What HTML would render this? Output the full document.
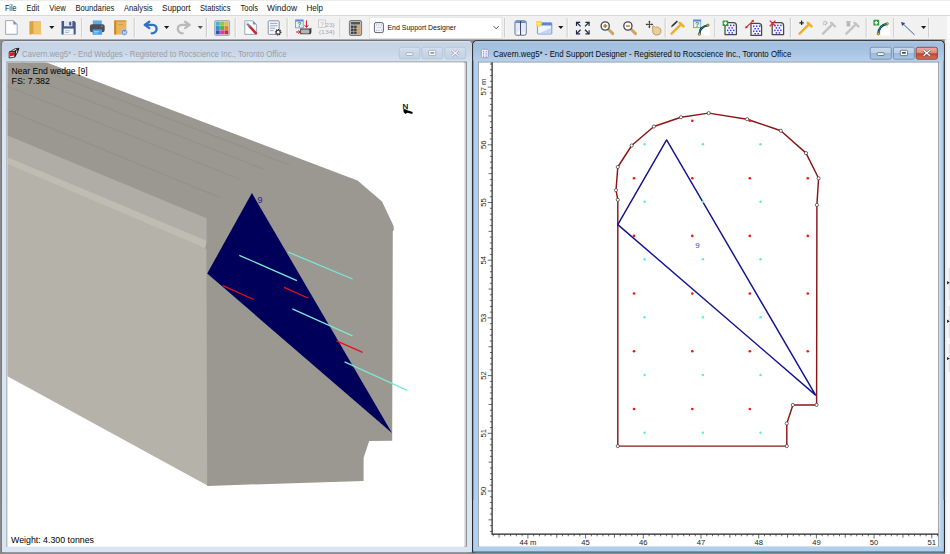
<!DOCTYPE html>
<html><head><meta charset="utf-8"><title>Cavern.weg5 - End Support Designer</title>
<style>
html,body{margin:0;padding:0;background:#fff;overflow:hidden}
body{width:950px;height:554px;position:relative;font-family:"Liberation Sans",sans-serif}
svg{position:absolute;left:0;top:0;display:block}
text{font-family:"Liberation Sans",sans-serif}
</style></head><body>
<svg width="950" height="554" viewBox="0 0 950 554">
<defs>
<linearGradient id="tbInact" x1="0" y1="0" x2="0" y2="1"><stop offset="0" stop-color="#dbe6f2"/><stop offset="0.09" stop-color="#c5d3e4"/><stop offset="0.5" stop-color="#c9d7e8"/><stop offset="1" stop-color="#d6e3f1"/></linearGradient>
<linearGradient id="tbAct" x1="0" y1="0" x2="0" y2="1"><stop offset="0" stop-color="#bcd3ec"/><stop offset="0.1" stop-color="#a1bede"/><stop offset="0.5" stop-color="#a8c4e3"/><stop offset="1" stop-color="#b8d1ec"/></linearGradient>
<linearGradient id="btnI" x1="0" y1="0" x2="0" y2="1"><stop offset="0" stop-color="#d5e0ee"/><stop offset="0.5" stop-color="#c9d6e7"/><stop offset="1" stop-color="#c4d2e4"/></linearGradient>
<linearGradient id="btnA" x1="0" y1="0" x2="0" y2="1"><stop offset="0" stop-color="#c9daee"/><stop offset="0.48" stop-color="#bccfe8"/><stop offset="0.52" stop-color="#9db9db"/><stop offset="1" stop-color="#adc6e4"/></linearGradient>
<linearGradient id="btnX" x1="0" y1="0" x2="0" y2="1"><stop offset="0" stop-color="#e7b0a4"/><stop offset="0.46" stop-color="#d98c7c"/><stop offset="0.54" stop-color="#c6432b"/><stop offset="1" stop-color="#d4735b"/></linearGradient>
<linearGradient id="shadR" x1="0" y1="0" x2="1" y2="0"><stop offset="0.994" stop-color="#ffffff"/><stop offset="1" stop-color="#c4c4c4"/></linearGradient>
</defs>

<rect x="0" y="0" width="950" height="554" fill="#ffffff"/>
<rect x="0" y="0" width="950" height="1" fill="#ececec"/>
<rect x="0" y="15" width="950" height="1" fill="#d9d9d9"/>
<rect x="0" y="16" width="950" height="23.5" fill="#f1f1f1"/>
<rect x="0" y="39.3" width="950" height="515" fill="#8a8a8a"/>
<rect x="944.8" y="39.3" width="5.2" height="515" fill="#e9e9e9"/>
<rect x="946.5" y="39.3" width="3.5" height="515" fill="#f8f8f8"/>
<rect x="947" y="16" width="3" height="23.3" fill="#fbfbfb"/>
<rect x="1.3" y="40.5" width="471.2" height="512" rx="4.5" ry="4.5" fill="#5e6166"/>
<rect x="1.3" y="500" width="471.2" height="52.5" fill="#5e6166"/>
<rect x="1.9" y="41" width="470" height="511.2" rx="4" ry="4" fill="#d9e5f3"/>
<rect x="1.9" y="500" width="470" height="52.2" fill="#d9e5f3"/>
<rect x="1.9" y="41" width="470" height="22" rx="4" ry="4" fill="url(#tbInact)"/>
<rect x="6.6" y="61.6" width="460.2" height="485.2" fill="#7e7e7e"/>
<rect x="7.5" y="62.5" width="458.5" height="484.2" fill="url(#shadR)"/>
<rect x="7.5" y="62.5" width="456.3" height="484.2" fill="#ffffff"/>
<rect x="472.2" y="40.3" width="472.6" height="512.8" rx="4.5" ry="4.5" fill="#23262b"/>
<rect x="472.2" y="500" width="472.6" height="53.1" fill="#23262b"/>
<rect x="473.3" y="41.2" width="470.4" height="511" rx="3.5" ry="3.5" fill="#b3cfee"/>
<rect x="473.3" y="500" width="470.4" height="52.2" fill="#b3cfee"/>
<rect x="473.3" y="41.2" width="470.4" height="21" rx="3.5" ry="3.5" fill="url(#tbAct)"/>
<rect x="939" y="63" width="1.6" height="484" fill="#c9ddf3"/>
<rect x="473.3" y="551.3" width="470.4" height="1.2" fill="#3c8ea6"/>
<rect x="478" y="61.7" width="461" height="485.2" fill="#8a929b"/>
<rect x="478.8" y="62.5" width="459.4" height="484.2" fill="#ffffff"/>
<rect x="0" y="552.8" width="945" height="1.2" fill="#8a8a8a"/>
<text x="5.0" y="11.1" font-size="8.8" fill="#141414" textLength="11.4" lengthAdjust="spacingAndGlyphs">File</text>
<text x="26.5" y="11.1" font-size="8.8" fill="#141414" textLength="12.7" lengthAdjust="spacingAndGlyphs">Edit</text>
<text x="49.3" y="11.1" font-size="8.8" fill="#141414" textLength="16.4" lengthAdjust="spacingAndGlyphs">View</text>
<text x="75.4" y="11.1" font-size="8.8" fill="#141414" textLength="38.9" lengthAdjust="spacingAndGlyphs">Boundaries</text>
<text x="124" y="11.1" font-size="8.8" fill="#141414" textLength="28.5" lengthAdjust="spacingAndGlyphs">Analysis</text>
<text x="162" y="11.1" font-size="8.8" fill="#141414" textLength="28.5" lengthAdjust="spacingAndGlyphs">Support</text>
<text x="200" y="11.1" font-size="8.8" fill="#141414" textLength="30.5" lengthAdjust="spacingAndGlyphs">Statistics</text>
<text x="240.5" y="11.1" font-size="8.8" fill="#141414" textLength="17.5" lengthAdjust="spacingAndGlyphs">Tools</text>
<text x="267" y="11.1" font-size="8.8" fill="#141414" textLength="30.0" lengthAdjust="spacingAndGlyphs">Window</text>
<text x="306.5" y="11.1" font-size="8.8" fill="#141414" textLength="16.5" lengthAdjust="spacingAndGlyphs">Help</text>
<text x="22" y="56.6" font-size="8.4" fill="#9a9fa9" textLength="264.5" lengthAdjust="spacingAndGlyphs">Cavern.weg5* - End Wedges - Registered to Rocscience Inc., Toronto Office</text>
<text x="493.3" y="56.6" font-size="8.4" fill="#0a0a0a" textLength="298" lengthAdjust="spacingAndGlyphs">Cavern.weg5* - End Support Designer - Registered to Rocscience Inc., Toronto Office</text>
<rect x="399.2" y="47.3" width="20.6" height="11.5" rx="1.8" fill="url(#btnI)" stroke="#b3c1d4" stroke-width="0.8"/>
<rect x="421.9" y="47.3" width="20.7" height="11.5" rx="1.8" fill="url(#btnI)" stroke="#b3c1d4" stroke-width="0.8"/>
<rect x="444.9" y="47.3" width="20.7" height="11.5" rx="1.8" fill="url(#btnI)" stroke="#b3c1d4" stroke-width="0.8"/>
<rect x="405.9" y="52.7" width="7.2" height="2.8" rx="1.2" fill="#f4f7fb" stroke="#8e99ad" stroke-width="0.7"/>
<rect x="428.6" y="50.3" width="7.2" height="5.3" rx="1" fill="#f4f7fb" stroke="#8e99ad" stroke-width="0.7"/>
<rect x="430.4" y="52" width="3.8" height="1.7" fill="#8e99ad"/>
<path d="M452.05 50.35L458.45 55.85M458.45 50.35L452.05 55.85" stroke="#8e99ad" stroke-width="2.5" stroke-linecap="butt"/>
<path d="M452.05 50.35L458.45 55.85M458.45 50.35L452.05 55.85" stroke="#f4f7fb" stroke-width="1.35" stroke-linecap="butt"/>
<rect x="870.2" y="47.3" width="21.1" height="11.9" rx="1.8" fill="url(#btnA)" stroke="#6f87a6" stroke-width="0.8"/>
<rect x="893.4" y="47.3" width="21.0" height="11.9" rx="1.8" fill="url(#btnA)" stroke="#6f87a6" stroke-width="0.8"/>
<rect x="916.1" y="47.3" width="21.3" height="11.9" rx="1.8" fill="url(#btnX)" stroke="#85352a" stroke-width="0.8"/>
<rect x="877.1" y="52.7" width="7.2" height="2.8" rx="1.2" fill="#ffffff" stroke="#46505f" stroke-width="0.7"/>
<rect x="900.3" y="50.3" width="7.2" height="5.3" rx="1" fill="#ffffff" stroke="#46505f" stroke-width="0.7"/>
<rect x="902.0" y="52" width="3.8" height="1.7" fill="#46505f"/>
<path d="M923.55 50.35L929.95 55.85M929.95 50.35L923.55 55.85" stroke="#46505f" stroke-width="2.5" stroke-linecap="butt"/>
<path d="M923.55 50.35L929.95 55.85M929.95 50.35L923.55 55.85" stroke="#ffffff" stroke-width="1.35" stroke-linecap="butt"/>
<g id="view3d">
<clipPath id="clipL"><rect x="7.5" y="62.5" width="456.3" height="484.2"/></clipPath>
<g clip-path="url(#clipL)">
<polygon fill="#afada5" points="6.6,134.0 208.3,217.8 208.3,242.5 6.6,158.0"/>
<polygon fill="#b4b2a9" points="6.6,162.5 206.4,247.2 208.4,249.5 208.4,486.1 6.6,375.7"/>
<polygon fill="#bfbcb2" points="6.6,156.8 207.6,241.3 206.2,248.4 6.6,163.7"/>
<polygon fill="#9b9891" points="6.6,61.5 44.1,61.5 357.5,180.4 382,201.6 393.4,225.6 394,229.6 392.8,231.6 392.2,440.7 369.2,441.1 363.6,457.8 363.6,480.9 207.2,485.9 206.4,249.6 205.3,248.4 206.6,241.2 206.6,218.2 6.6,135.1"/>
<line x1="6.6" y1="56.3" x2="290.1" y2="165.2" stroke="#8d8a83" stroke-width="0.6"/>
<line x1="6.6" y1="68.7" x2="264.8" y2="169.5" stroke="#8d8a83" stroke-width="0.6"/>
<line x1="6.6" y1="86.1" x2="240.8" y2="179.6" stroke="#8d8a83" stroke-width="0.6"/>
<line x1="6.6" y1="109.8" x2="219.4" y2="197.3" stroke="#8d8a83" stroke-width="0.6"/>
<polygon fill="#00005a" points="251.9,193.1 207.2,273.5 392,433"/>
<line x1="239.3" y1="255.3" x2="296.9" y2="280.6" stroke="#7be8d4" stroke-width="1.3"/>
<line x1="288" y1="252" x2="352.5" y2="279" stroke="#7be8d4" stroke-width="1.3"/>
<line x1="222.8" y1="285.6" x2="253.9" y2="299.5" stroke="#e8101a" stroke-width="1.3"/>
<line x1="284" y1="287.4" x2="308" y2="298" stroke="#e8101a" stroke-width="1.3"/>
<line x1="292.3" y1="308.8" x2="352.5" y2="335.9" stroke="#7be8d4" stroke-width="1.3"/>
<line x1="336.5" y1="340.9" x2="362.6" y2="352.3" stroke="#e8101a" stroke-width="1.3"/>
<line x1="344.6" y1="361.9" x2="407.3" y2="390.4" stroke="#7be8d4" stroke-width="1.3"/>
<text x="257.6" y="203" font-size="9" fill="#2424a0">9</text>
<text x="402.4" y="109.3" font-size="8" fill="#000" stroke="#000" stroke-width="0.25">N</text>
<path d="M403.3 109.6L404.8 108.9L407.3 110.3L412.7 112.1L412.3 113.9L407.4 112.7L405.5 114L403.7 112.2Z" fill="#000"/>
</g>
<text x="11.5" y="73.8" font-size="9.7" fill="#000" textLength="76.1" lengthAdjust="spacingAndGlyphs">Near End wedge [9]</text>
<text x="11.5" y="84.4" font-size="9.7" fill="#000" textLength="38.5" lengthAdjust="spacingAndGlyphs">FS: 7.382</text>
<text x="11" y="543" font-size="9.5" fill="#000" textLength="83" lengthAdjust="spacingAndGlyphs">Weight: 4.300 tonnes</text>
</g>
<g id="view2d">
<polygon fill="none" stroke="#8c1616" stroke-width="1.45" stroke-linejoin="round" points="617.8,446.1 617.8,199.8 616,190.2 617.8,167.0 631.7,145.5 653.9,126.5 681.0,117.2 708.7,113.1 747.1,119.2 780.8,130.8 806.0,153.1 818.6,178.3 816.9,204.9 816.6,404.9 792.9,404.9 786.8,423.4 786.8,446.1"/>
<polygon fill="none" stroke="#141492" stroke-width="1.45" stroke-linejoin="round" points="666.6,139.9 617.8,224.6 815.6,395.1"/>
<text x="695.3" y="247.8" font-size="8" fill="#4848a8">9</text>
<circle cx="692.3" cy="120.7" r="1.3" fill="#f01414"/>
<circle cx="749.8" cy="120.7" r="1.3" fill="#f01414"/>
<circle cx="634" cy="178.3" r="1.3" fill="#f01414"/>
<circle cx="692.3" cy="178.3" r="1.3" fill="#f01414"/>
<circle cx="749.8" cy="178.3" r="1.3" fill="#f01414"/>
<circle cx="807.8" cy="178.3" r="1.3" fill="#f01414"/>
<circle cx="634" cy="235.9" r="1.3" fill="#f01414"/>
<circle cx="692.3" cy="235.9" r="1.3" fill="#f01414"/>
<circle cx="749.8" cy="235.9" r="1.3" fill="#f01414"/>
<circle cx="807.8" cy="235.9" r="1.3" fill="#f01414"/>
<circle cx="634" cy="293.5" r="1.3" fill="#f01414"/>
<circle cx="692.3" cy="293.5" r="1.3" fill="#f01414"/>
<circle cx="749.8" cy="293.5" r="1.3" fill="#f01414"/>
<circle cx="807.8" cy="293.5" r="1.3" fill="#f01414"/>
<circle cx="634" cy="351.3" r="1.3" fill="#f01414"/>
<circle cx="692.3" cy="351.3" r="1.3" fill="#f01414"/>
<circle cx="749.8" cy="351.3" r="1.3" fill="#f01414"/>
<circle cx="807.8" cy="351.3" r="1.3" fill="#f01414"/>
<circle cx="634" cy="409.0" r="1.3" fill="#f01414"/>
<circle cx="692.3" cy="409.0" r="1.3" fill="#f01414"/>
<circle cx="749.8" cy="409.0" r="1.3" fill="#f01414"/>
<circle cx="644.6" cy="144.2" r="1.25" fill="#62ecd0"/>
<circle cx="702.9" cy="144.2" r="1.25" fill="#62ecd0"/>
<circle cx="760.5" cy="144.2" r="1.25" fill="#62ecd0"/>
<circle cx="644.6" cy="201.7" r="1.25" fill="#62ecd0"/>
<circle cx="702.9" cy="201.7" r="1.25" fill="#62ecd0"/>
<circle cx="760.5" cy="201.7" r="1.25" fill="#62ecd0"/>
<circle cx="644.6" cy="259.3" r="1.25" fill="#62ecd0"/>
<circle cx="702.9" cy="259.3" r="1.25" fill="#62ecd0"/>
<circle cx="760.5" cy="259.3" r="1.25" fill="#62ecd0"/>
<circle cx="644.6" cy="317.2" r="1.25" fill="#62ecd0"/>
<circle cx="702.9" cy="317.2" r="1.25" fill="#62ecd0"/>
<circle cx="760.5" cy="317.2" r="1.25" fill="#62ecd0"/>
<circle cx="644.6" cy="375.0" r="1.25" fill="#62ecd0"/>
<circle cx="702.9" cy="375.0" r="1.25" fill="#62ecd0"/>
<circle cx="760.5" cy="375.0" r="1.25" fill="#62ecd0"/>
<circle cx="644.6" cy="432.7" r="1.25" fill="#62ecd0"/>
<circle cx="702.9" cy="432.7" r="1.25" fill="#62ecd0"/>
<circle cx="760.5" cy="432.7" r="1.25" fill="#62ecd0"/>
<circle cx="617.8" cy="446.1" r="1.6" fill="#fff" stroke="#333" stroke-width="0.7"/>
<circle cx="617.8" cy="199.8" r="1.6" fill="#fff" stroke="#333" stroke-width="0.7"/>
<circle cx="616" cy="190.2" r="1.6" fill="#fff" stroke="#333" stroke-width="0.7"/>
<circle cx="617.8" cy="167.0" r="1.6" fill="#fff" stroke="#333" stroke-width="0.7"/>
<circle cx="631.7" cy="145.5" r="1.6" fill="#fff" stroke="#333" stroke-width="0.7"/>
<circle cx="653.9" cy="126.5" r="1.6" fill="#fff" stroke="#333" stroke-width="0.7"/>
<circle cx="681.0" cy="117.2" r="1.6" fill="#fff" stroke="#333" stroke-width="0.7"/>
<circle cx="708.7" cy="113.1" r="1.6" fill="#fff" stroke="#333" stroke-width="0.7"/>
<circle cx="747.1" cy="119.2" r="1.6" fill="#fff" stroke="#333" stroke-width="0.7"/>
<circle cx="780.8" cy="130.8" r="1.6" fill="#fff" stroke="#333" stroke-width="0.7"/>
<circle cx="806.0" cy="153.1" r="1.6" fill="#fff" stroke="#333" stroke-width="0.7"/>
<circle cx="818.6" cy="178.3" r="1.6" fill="#fff" stroke="#333" stroke-width="0.7"/>
<circle cx="816.9" cy="204.9" r="1.6" fill="#fff" stroke="#333" stroke-width="0.7"/>
<circle cx="816.6" cy="404.9" r="1.6" fill="#fff" stroke="#333" stroke-width="0.7"/>
<circle cx="792.9" cy="404.9" r="1.6" fill="#fff" stroke="#333" stroke-width="0.7"/>
<circle cx="786.8" cy="423.4" r="1.6" fill="#fff" stroke="#333" stroke-width="0.7"/>
<circle cx="786.8" cy="446.1" r="1.6" fill="#fff" stroke="#333" stroke-width="0.7"/>
<path d="M492.1 62.3 V534.1 H938.2" fill="none" stroke="#222" stroke-width="1.2"/>
<path d="M493.28 534.1v2.2M499.05 534.1v3.6M504.82 534.1v2.2M510.59 534.1v2.2M516.36 534.1v2.2M522.13 534.1v2.2M527.90 534.1v4.4M533.67 534.1v2.2M539.44 534.1v2.2M545.21 534.1v2.2M550.98 534.1v2.2M556.75 534.1v3.6M562.52 534.1v2.2M568.29 534.1v2.2M574.06 534.1v2.2M579.83 534.1v2.2M585.60 534.1v4.4M591.37 534.1v2.2M597.14 534.1v2.2M602.91 534.1v2.2M608.68 534.1v2.2M614.45 534.1v3.6M620.22 534.1v2.2M625.99 534.1v2.2M631.76 534.1v2.2M637.53 534.1v2.2M643.30 534.1v4.4M649.07 534.1v2.2M654.84 534.1v2.2M660.61 534.1v2.2M666.38 534.1v2.2M672.15 534.1v3.6M677.92 534.1v2.2M683.69 534.1v2.2M689.46 534.1v2.2M695.23 534.1v2.2M701.00 534.1v4.4M706.77 534.1v2.2M712.54 534.1v2.2M718.31 534.1v2.2M724.08 534.1v2.2M729.85 534.1v3.6M735.62 534.1v2.2M741.39 534.1v2.2M747.16 534.1v2.2M752.93 534.1v2.2M758.70 534.1v4.4M764.47 534.1v2.2M770.24 534.1v2.2M776.01 534.1v2.2M781.78 534.1v2.2M787.55 534.1v3.6M793.32 534.1v2.2M799.09 534.1v2.2M804.86 534.1v2.2M810.63 534.1v2.2M816.40 534.1v4.4M822.17 534.1v2.2M827.94 534.1v2.2M833.71 534.1v2.2M839.48 534.1v2.2M845.25 534.1v3.6M851.02 534.1v2.2M856.79 534.1v2.2M862.56 534.1v2.2M868.33 534.1v2.2M874.10 534.1v4.4M879.87 534.1v2.2M885.64 534.1v2.2M891.41 534.1v2.2M897.18 534.1v2.2M902.95 534.1v3.6M908.72 534.1v2.2M914.49 534.1v2.2M920.26 534.1v2.2M926.03 534.1v2.2M931.80 534.1v4.4M937.57 534.1v2.2M492.1 64.02h-2.2M492.1 69.79h-2.2M492.1 75.56h-2.2M492.1 81.33h-2.2M492.1 87.10h-4.4M492.1 92.87h-2.2M492.1 98.64h-2.2M492.1 104.41h-2.2M492.1 110.18h-2.2M492.1 115.95h-3.6M492.1 121.72h-2.2M492.1 127.49h-2.2M492.1 133.26h-2.2M492.1 139.03h-2.2M492.1 144.80h-4.4M492.1 150.57h-2.2M492.1 156.34h-2.2M492.1 162.11h-2.2M492.1 167.88h-2.2M492.1 173.65h-3.6M492.1 179.42h-2.2M492.1 185.19h-2.2M492.1 190.96h-2.2M492.1 196.73h-2.2M492.1 202.50h-4.4M492.1 208.27h-2.2M492.1 214.04h-2.2M492.1 219.81h-2.2M492.1 225.58h-2.2M492.1 231.35h-3.6M492.1 237.12h-2.2M492.1 242.89h-2.2M492.1 248.66h-2.2M492.1 254.43h-2.2M492.1 260.20h-4.4M492.1 265.97h-2.2M492.1 271.74h-2.2M492.1 277.51h-2.2M492.1 283.28h-2.2M492.1 289.05h-3.6M492.1 294.82h-2.2M492.1 300.59h-2.2M492.1 306.36h-2.2M492.1 312.13h-2.2M492.1 317.90h-4.4M492.1 323.67h-2.2M492.1 329.44h-2.2M492.1 335.21h-2.2M492.1 340.98h-2.2M492.1 346.75h-3.6M492.1 352.52h-2.2M492.1 358.29h-2.2M492.1 364.06h-2.2M492.1 369.83h-2.2M492.1 375.60h-4.4M492.1 381.37h-2.2M492.1 387.14h-2.2M492.1 392.91h-2.2M492.1 398.68h-2.2M492.1 404.45h-3.6M492.1 410.22h-2.2M492.1 415.99h-2.2M492.1 421.76h-2.2M492.1 427.53h-2.2M492.1 433.30h-4.4M492.1 439.07h-2.2M492.1 444.84h-2.2M492.1 450.61h-2.2M492.1 456.38h-2.2M492.1 462.15h-3.6M492.1 467.92h-2.2M492.1 473.69h-2.2M492.1 479.46h-2.2M492.1 485.23h-2.2M492.1 491.00h-4.4M492.1 496.77h-2.2M492.1 502.54h-2.2M492.1 508.31h-2.2M492.1 514.08h-2.2M492.1 519.85h-3.6M492.1 525.62h-2.2M492.1 531.39h-2.2" fill="none" stroke="#2a2a2a" stroke-width="0.7"/>
<text x="527.9" y="545.3" font-size="7.6" fill="#222" text-anchor="middle">44 m</text>
<text x="585.6" y="545.3" font-size="7.6" fill="#222" text-anchor="middle">45</text>
<text x="643.3" y="545.3" font-size="7.6" fill="#222" text-anchor="middle">46</text>
<text x="701.0" y="545.3" font-size="7.6" fill="#222" text-anchor="middle">47</text>
<text x="758.7" y="545.3" font-size="7.6" fill="#222" text-anchor="middle">48</text>
<text x="816.4" y="545.3" font-size="7.6" fill="#222" text-anchor="middle">49</text>
<text x="874.1" y="545.3" font-size="7.6" fill="#222" text-anchor="middle">50</text>
<text x="931.8" y="545.3" font-size="7.6" fill="#222" text-anchor="middle">51</text>
<text transform="translate(486.4 491.0) rotate(-90)" font-size="7.6" fill="#222" text-anchor="middle">50</text>
<text transform="translate(486.4 433.3) rotate(-90)" font-size="7.6" fill="#222" text-anchor="middle">51</text>
<text transform="translate(486.4 375.6) rotate(-90)" font-size="7.6" fill="#222" text-anchor="middle">52</text>
<text transform="translate(486.4 317.9) rotate(-90)" font-size="7.6" fill="#222" text-anchor="middle">53</text>
<text transform="translate(486.4 260.2) rotate(-90)" font-size="7.6" fill="#222" text-anchor="middle">54</text>
<text transform="translate(486.4 202.5) rotate(-90)" font-size="7.6" fill="#222" text-anchor="middle">55</text>
<text transform="translate(486.4 144.8) rotate(-90)" font-size="7.6" fill="#222" text-anchor="middle">56</text>
<text transform="translate(486.4 87.1) rotate(-90)" font-size="7.6" fill="#222" text-anchor="middle">57 m</text>
</g>
<g id="toolbar">
<rect x="81.1" y="18" width="1.2" height="19.5" fill="#cfcfcf"/><rect x="82.3" y="18" width="0.8" height="19.5" fill="#fafafa"/>
<rect x="133.7" y="18" width="1.2" height="19.5" fill="#cfcfcf"/><rect x="134.9" y="18" width="0.8" height="19.5" fill="#fafafa"/>
<rect x="205.79999999999998" y="18" width="1.2" height="19.5" fill="#cfcfcf"/><rect x="207.0" y="18" width="0.8" height="19.5" fill="#fafafa"/>
<rect x="234.6" y="18" width="1.2" height="19.5" fill="#cfcfcf"/><rect x="235.8" y="18" width="0.8" height="19.5" fill="#fafafa"/>
<rect x="286.6" y="18" width="1.2" height="19.5" fill="#cfcfcf"/><rect x="287.8" y="18" width="0.8" height="19.5" fill="#fafafa"/>
<rect x="339.3" y="18" width="1.2" height="19.5" fill="#cfcfcf"/><rect x="340.5" y="18" width="0.8" height="19.5" fill="#fafafa"/>
<rect x="504.0" y="18" width="1.2" height="19.5" fill="#cfcfcf"/><rect x="505.2" y="18" width="0.8" height="19.5" fill="#fafafa"/>
<rect x="566.6" y="18" width="1.2" height="19.5" fill="#cfcfcf"/><rect x="567.8" y="18" width="0.8" height="19.5" fill="#fafafa"/>
<rect x="664.6" y="18" width="1.2" height="19.5" fill="#cfcfcf"/><rect x="665.8" y="18" width="0.8" height="19.5" fill="#fafafa"/>
<rect x="714.2" y="18" width="1.2" height="19.5" fill="#cfcfcf"/><rect x="715.4" y="18" width="0.8" height="19.5" fill="#fafafa"/>
<rect x="789.8000000000001" y="18" width="1.2" height="19.5" fill="#cfcfcf"/><rect x="791.0" y="18" width="0.8" height="19.5" fill="#fafafa"/>
<rect x="865.6" y="18" width="1.2" height="19.5" fill="#cfcfcf"/><rect x="866.8" y="18" width="0.8" height="19.5" fill="#fafafa"/>
<rect x="893.1" y="18" width="1.2" height="19.5" fill="#cfcfcf"/><rect x="894.3" y="18" width="0.8" height="19.5" fill="#fafafa"/>
<rect x="928.0" y="18" width="1.2" height="19.5" fill="#cfcfcf"/><rect x="929.1999999999999" y="18" width="0.8" height="19.5" fill="#fafafa"/>
<path d="M5.6 20.6H13.4L17.2 24.4V34.3H5.6Z" fill="#fdfdfe" stroke="#8fa0bb" stroke-width="0.9" stroke-linejoin="round"/><path d="M13.4 20.6V24.4H17.2Z" fill="#7d93b8"/>
<path d="M29.6 21.6L36.2 20.9V33.4L29.6 34.6Z" fill="#e2ae4c"/><path d="M33 21H41V33.2H41.6V34.4H33Z" fill="#efc46d"/><path d="M29.6 21.6L33.4 21.2V33.8L29.6 34.6Z" fill="#d9a33f"/>
<path d="M49.199999999999996 26.0H54.4L51.8 29.0Z" fill="#1a1a1a"/>
<path d="M61.5 21H74.2L75.7 22.5V34.6H61.5Z" fill="#42598a"/><rect x="64" y="21" width="8.4" height="5.3" fill="#dfe6f2"/><rect x="69.2" y="21.8" width="2" height="3.6" fill="#42598a"/><rect x="63.6" y="28.6" width="10" height="6" fill="#f3f5fa"/><rect x="65" y="30.4" width="5" height="0.8" fill="#9fb0cc"/><rect x="65" y="32" width="4" height="0.8" fill="#9fb0cc"/>
<rect x="92.8" y="20.4" width="9" height="5" fill="#5aa9ea"/><rect x="89.9" y="24.3" width="14.8" height="8" rx="2.2" fill="#4b5058"/><rect x="92.6" y="29.4" width="9.4" height="5.4" fill="#4ba0e8"/><rect x="94" y="31" width="5" height="0.8" fill="#a8d2f5"/><rect x="94" y="32.6" width="4" height="0.8" fill="#a8d2f5"/><circle cx="101.8" cy="26.2" r="0.8" fill="#2fd27a"/>
<path d="M114.2 21.2Q114.2 20.4 115.2 20.4H126.4V34.6H115.2Q114.2 34.6 114.2 33.6Z" fill="#eab45c"/><rect x="114.2" y="20.4" width="2" height="14.2" fill="#c98431"/><rect x="115.5" y="20.4" width="10.9" height="1.4" fill="#d9963f"/><rect x="118.4" y="24.2" width="5" height="0.9" fill="#d39748"/><circle cx="124.2" cy="32.2" r="3" fill="#5b86d8" stroke="#c9d8f3" stroke-width="0.7"/><text x="124.2" y="33.7" font-size="4.2" fill="#fff" text-anchor="middle" font-weight="bold">H</text>
<path d="M149.3 21.7L144.7 24.9L149.3 28.1" fill="none" stroke="#2f72c8" stroke-width="2.3" stroke-linecap="round" stroke-linejoin="round"/><path d="M145.4 24.9H152.6Q156.6 25 156.6 29Q156.4 33 151.7 33.3" fill="none" stroke="#2f72c8" stroke-width="2.3" stroke-linecap="round"/>
<path d="M164.0 26.0H169.2L166.6 29.0Z" fill="#1a1a1a"/>
<path d="M185.1 21.7L189.7 24.9L185.1 28.1" fill="none" stroke="#bababa" stroke-width="2.3" stroke-linecap="round" stroke-linejoin="round"/><path d="M189 24.9H181.8Q177.8 25 177.8 29Q178 33 182.7 33.3" fill="none" stroke="#bababa" stroke-width="2.3" stroke-linecap="round"/>
<path d="M197.70000000000002 26.0H202.9L200.3 29.0Z" fill="#555"/>
<rect x="214.6" y="20.5" width="15" height="15" rx="1.4" fill="#c9cfdb" stroke="#8e98ab" stroke-width="0.7"/>
<rect x="215.9" y="21.8" width="3.8" height="3.8" fill="#3bb7d8"/>
<rect x="220.2" y="21.8" width="3.8" height="3.8" fill="#8fc93a"/>
<rect x="224.5" y="21.8" width="3.8" height="3.8" fill="#f0c020"/>
<rect x="215.9" y="26.1" width="3.8" height="3.8" fill="#2c8fd0"/>
<rect x="220.2" y="26.1" width="3.8" height="3.8" fill="#4fb04a"/>
<rect x="224.5" y="26.1" width="3.8" height="3.8" fill="#ef7f1e"/>
<rect x="215.9" y="30.4" width="3.8" height="3.8" fill="#2a57b0"/>
<rect x="220.2" y="30.4" width="3.8" height="3.8" fill="#d63fa8"/>
<rect x="224.5" y="30.4" width="3.8" height="3.8" fill="#d32a2a"/>
<path d="M244.8 20.8H252.8L256.6 24.6V34.4H244.8Z" fill="#fcfdff" stroke="#8fa0bb" stroke-width="0.9" stroke-linejoin="round"/><path d="M252.8 20.8V24.6H256.6Z" fill="#7d93b8"/><path d="M249.4 26.2L255.8 33.2" stroke="#d0232b" stroke-width="2.5" stroke-linecap="round"/><path d="M247.2 23.6L249.4 26.2" stroke="#7d838d" stroke-width="2.2" stroke-linecap="round"/><circle cx="246.9" cy="23.2" r="0.8" fill="#fcfdff"/>
<rect x="268.2" y="20.8" width="11" height="13.6" rx="1" fill="#f4f6fa" stroke="#7d8798" stroke-width="0.9"/><path d="M270 23.4H277.4M270 25.8H277.4M270 28.2H275M270 30.6H273.6" stroke="#8aa0c8" stroke-width="0.9"/><circle cx="278.2" cy="32.2" r="2.5" fill="#fff" stroke="#222" stroke-width="1.4" stroke-dasharray="1.1 0.75"/><circle cx="278.2" cy="32.2" r="1.9" fill="#fff" stroke="#222" stroke-width="0.9"/>
<rect x="295.6" y="19.9" width="7.6" height="8" fill="#e9f0fa" stroke="#6d8fd0" stroke-width="0.8"/><rect x="295.6" y="19.9" width="7.6" height="1.6" fill="#5a86d6"/><text x="299.4" y="27.2" font-size="7" font-weight="bold" fill="#1f9a3a" text-anchor="middle">?</text><path d="M300.2 28.4H310.4L311.4 27.4V32.4L310.4 34.2H300.2Z" fill="#3a3a3a"/><rect x="301" y="29.6" width="8.4" height="3.8" rx="0.8" fill="#b5b5b5"/><path d="M306.4 20.4V27.2M304.6 25.2L306.4 27.4L308.2 25.2M296 32H300M298.4 30.4L300.2 32L298.4 33.6" stroke="#e01020" stroke-width="1" fill="none"/>
<rect x="318.6" y="20" width="7" height="7.4" fill="#f3f3f3" stroke="#c2c2c2" stroke-width="0.7"/><text x="322.1" y="26.6" font-size="6.6" fill="#b9b9b9" text-anchor="middle">?</text><text x="325.2" y="27.4" font-size="6.2" fill="#a9a9a9" textLength="9.6" lengthAdjust="spacingAndGlyphs">23}</text><text x="318.8" y="34.2" font-size="6.2" fill="#a9a9a9" textLength="16" lengthAdjust="spacingAndGlyphs">{134}</text>
<rect x="349.4" y="20.5" width="12.2" height="15" rx="1.6" fill="#b9b9b9" stroke="#767676" stroke-width="1"/><rect x="351" y="22" width="9" height="2.4" fill="#555"/>
<rect x="351.0" y="25.6" width="2.5" height="2.3" fill="#3d3d3d"/>
<rect x="354.1" y="25.6" width="2.5" height="2.3" fill="#3d3d3d"/>
<rect x="357.2" y="25.6" width="2.5" height="2.3" fill="#f39a2c"/>
<rect x="351.0" y="28.6" width="2.5" height="2.3" fill="#3d3d3d"/>
<rect x="354.1" y="28.6" width="2.5" height="2.3" fill="#3d3d3d"/>
<rect x="357.2" y="28.6" width="2.5" height="2.3" fill="#f39a2c"/>
<rect x="351.0" y="31.6" width="2.5" height="2.3" fill="#3d3d3d"/>
<rect x="354.1" y="31.6" width="2.5" height="2.3" fill="#3d3d3d"/>
<rect x="357.2" y="31.6" width="2.5" height="2.3" fill="#f39a2c"/>
<rect x="369.6" y="17.2" width="132.4" height="21.4" fill="#ffffff" stroke="#dcdcdc" stroke-width="0.8"/>
<rect x="374.4" y="22.6" width="9" height="10" rx="1.6" fill="#f4f4fb" stroke="#555" stroke-width="0.9"/>
<rect x="376.20000000000005" y="24.6" width="0.8" height="0.8" fill="#6c6cf0"/>
<rect x="378.6" y="24.6" width="0.8" height="0.8" fill="#6c6cf0"/>
<rect x="381.0" y="24.6" width="0.8" height="0.8" fill="#6c6cf0"/>
<rect x="377.40000000000003" y="27.200000000000003" width="0.8" height="0.8" fill="#6c6cf0"/>
<rect x="379.8" y="27.200000000000003" width="0.8" height="0.8" fill="#6c6cf0"/>
<rect x="376.20000000000005" y="29.8" width="0.8" height="0.8" fill="#6c6cf0"/>
<rect x="378.6" y="29.8" width="0.8" height="0.8" fill="#6c6cf0"/>
<rect x="381.0" y="29.8" width="0.8" height="0.8" fill="#6c6cf0"/>
<text x="387.4" y="30.4" font-size="8" fill="#111" textLength="68.6" lengthAdjust="spacingAndGlyphs">End Support Designer</text>
<path d="M493.6 26.2L496.2 28.8L498.8 26.2" fill="none" stroke="#444" stroke-width="0.9"/>
<rect x="515" y="20.8" width="11.2" height="14.4" rx="1.6" fill="#fbfcff" stroke="#5c6d8e" stroke-width="1"/><rect x="515.5" y="21.3" width="10.2" height="1.8" fill="#5b86d8"/><path d="M520.6 21V35" stroke="#39445c" stroke-width="1.1"/><path d="M516 23.2H520V30L516 34.5Z" fill="#e3e9f5"/><path d="M521.2 23.2H525.6V30L521.2 34.5Z" fill="#e3e9f5"/>
<rect x="537.4" y="22.8" width="14.4" height="11.2" rx="0.8" fill="#dfe8f8" stroke="#5f83c9" stroke-width="0.8"/><rect x="537.4" y="22.8" width="14.4" height="2.6" fill="#5b86d8"/><rect x="538.4" y="26.2" width="12.4" height="7" fill="#f1f5fc"/><path d="M539.2 33.2H550.8V28Z" fill="#c5d4ee"/><rect x="536.2" y="21" width="5.4" height="5.4" fill="#f5d046"/><path d="M538.9 20.6V26.8M535.8 23.7H542M536.8 21.6L541 25.8M541 21.6L536.8 25.8" stroke="#fbe88a" stroke-width="0.7"/>
<path d="M558.1999999999999 26.0H563.4L560.8 29.0Z" fill="#1a1a1a"/>
<path d="M576.5 22.3H579.6M576.5 22.3V25.400000000000002" stroke="#1f2a44" stroke-width="1.15" fill="none" stroke-linecap="square"/><path d="M576.5 22.3L580.6 26.4" stroke="#1f2a44" stroke-width="1.25" fill="none"/>
<path d="M589.1 22.3H586.0M589.1 22.3V25.400000000000002" stroke="#1f2a44" stroke-width="1.15" fill="none" stroke-linecap="square"/><path d="M589.1 22.3L585.0 26.4" stroke="#1f2a44" stroke-width="1.25" fill="none"/>
<path d="M576.5 33.9H579.6M576.5 33.9V30.799999999999997" stroke="#1f2a44" stroke-width="1.15" fill="none" stroke-linecap="square"/><path d="M576.5 33.9L580.6 29.799999999999997" stroke="#1f2a44" stroke-width="1.25" fill="none"/>
<path d="M589.1 33.9H586.0M589.1 33.9V30.799999999999997" stroke="#1f2a44" stroke-width="1.15" fill="none" stroke-linecap="square"/><path d="M589.1 33.9L585.0 29.799999999999997" stroke="#1f2a44" stroke-width="1.25" fill="none"/>
<path d="M608.4000000000001 29.2L612.8000000000001 33.6" stroke="#cfa55c" stroke-width="2.9" stroke-linecap="round"/>
<circle cx="605.2" cy="26" r="4.1" fill="#fafafa" stroke="#454a55" stroke-width="1.35"/>
<path d="M603.2 26H607.2" stroke="#b27a2a" stroke-width="1.4"/>
<path d="M605.2 24V28" stroke="#b27a2a" stroke-width="1.4"/>
<path d="M631.1 29.2L635.5 33.6" stroke="#cfa55c" stroke-width="2.9" stroke-linecap="round"/>
<circle cx="627.9" cy="26" r="4.1" fill="#fafafa" stroke="#454a55" stroke-width="1.35"/>
<path d="M625.9 26H629.9" stroke="#b27a2a" stroke-width="1.4"/>
<path d="M649.4 21.2V27.6M646.2 24.4H652.6" stroke="#333" stroke-width="0.9"/><path d="M649.4 20.6L648.2 22.2H650.6ZM649.4 28.2L648.2 26.6H650.6ZM645.6 24.4L647.2 23.2V25.6ZM653.2 24.4L651.6 23.2V25.6Z" fill="#333"/><path d="M652.6 26.4Q653.6 25.4 654.6 26.6L655.4 27.4Q656.4 26.4 657.4 27.4Q658.6 26.8 659.4 28Q660.8 28.2 660.8 30V32.4Q660.2 35 657.4 35H655.6Q653.6 34.6 652.8 32.4Z" fill="#e8cfa2" stroke="#b58a48" stroke-width="0.8"/>
<path d="M671.6 33.6L681.2 24.200000000000003" stroke="#e9b12c" stroke-width="2.5" stroke-linecap="round"/><path d="M679.8000000000001 22.8L683.6 26.400000000000002" stroke="#e9b12c" stroke-width="2.5" stroke-linecap="round"/>
<path d="M672 26.2L677.4 21.2" stroke="#333" stroke-width="1.6"/><path d="M671 27.6L672.4 26.6L671.6 25.8Z" fill="#333"/>
<rect x="700" y="25" width="9.6" height="10.4" fill="#ffffff"/>
<rect x="693.4" y="19.9" width="7.4" height="7.8" fill="#e9f0fa" stroke="#6d8fd0" stroke-width="0.8"/><rect x="693.4" y="19.9" width="7.4" height="1.6" fill="#5a86d6"/><text x="697.1" y="27.099999999999998" font-size="7" font-weight="bold" fill="#1f9a3a" text-anchor="middle">?</text>
<path d="M699.4 34.2Q699.6 26.6 708 25.2" fill="none" stroke="#0b2a2e" stroke-width="2"/><path d="M699.4 34.2Q699.6 26.6 708 25.2" fill="none" stroke="#17a7a5" stroke-width="0.8"/><circle cx="699.4" cy="34.2" r="1.2" fill="#e8d020" stroke="#333" stroke-width="0.5"/><circle cx="708" cy="25.2" r="1.2" fill="#e8d020" stroke="#333" stroke-width="0.5"/>
<path d="M725 22.6H733.4Q736.4 22.6 736.4 25.6V34.6H725Z" fill="#f4f4fa" stroke="#484848" stroke-width="1.25" stroke-linejoin="round"/>
<rect x="727.00" y="24.70" width="1.4" height="1.4" fill="#2a2af2"/>
<rect x="730.00" y="24.70" width="1.4" height="1.4" fill="#2a2af2"/>
<rect x="733.00" y="24.70" width="1.4" height="1.4" fill="#2a2af2"/>
<rect x="728.50" y="27.20" width="1.4" height="1.4" fill="#2a2af2"/>
<rect x="731.50" y="27.20" width="1.4" height="1.4" fill="#2a2af2"/>
<rect x="727.00" y="29.70" width="1.4" height="1.4" fill="#2a2af2"/>
<rect x="730.00" y="29.70" width="1.4" height="1.4" fill="#2a2af2"/>
<rect x="733.00" y="29.70" width="1.4" height="1.4" fill="#2a2af2"/>
<rect x="728.50" y="32.20" width="1.4" height="1.4" fill="#2a2af2"/>
<rect x="731.50" y="32.20" width="1.4" height="1.4" fill="#2a2af2"/>
<rect x="722.6" y="20.4" width="5.6" height="5.6" rx="0.6" fill="#2e9a3a"/><path d="M725.4 21.6V24.8M723.8 23.2H727" stroke="#fff" stroke-width="1.5"/>
<path d="M751 23.4H758.6Q761.6 23.4 761.6 26.4V35.4H751Z" fill="#f4f4fa" stroke="#484848" stroke-width="1.25" stroke-linejoin="round"/>
<rect x="753.00" y="25.50" width="1.4" height="1.4" fill="#2a2af2"/>
<rect x="756.00" y="25.50" width="1.4" height="1.4" fill="#2a2af2"/>
<rect x="759.00" y="25.50" width="1.4" height="1.4" fill="#2a2af2"/>
<rect x="754.50" y="28.00" width="1.4" height="1.4" fill="#2a2af2"/>
<rect x="757.50" y="28.00" width="1.4" height="1.4" fill="#2a2af2"/>
<rect x="753.00" y="30.50" width="1.4" height="1.4" fill="#2a2af2"/>
<rect x="756.00" y="30.50" width="1.4" height="1.4" fill="#2a2af2"/>
<rect x="759.00" y="30.50" width="1.4" height="1.4" fill="#2a2af2"/>
<rect x="754.50" y="33.00" width="1.4" height="1.4" fill="#2a2af2"/>
<rect x="757.50" y="33.00" width="1.4" height="1.4" fill="#2a2af2"/>
<path d="M745.8 27.8L753.4 20.4" stroke="#e8202a" stroke-width="1.1"/><path d="M745.2 28.4L745.8 25.6L748 27.8ZM754 19.8L753.4 22.6L751.2 20.4Z" fill="#e8202a"/>
<path d="M772.2 22.6H780.6Q783.6 22.6 783.6 25.6V34.6H772.2Z" fill="#f4f4fa" stroke="#484848" stroke-width="1.25" stroke-linejoin="round"/>
<rect x="774.20" y="24.70" width="1.4" height="1.4" fill="#2a2af2"/>
<rect x="777.20" y="24.70" width="1.4" height="1.4" fill="#2a2af2"/>
<rect x="780.20" y="24.70" width="1.4" height="1.4" fill="#2a2af2"/>
<rect x="775.70" y="27.20" width="1.4" height="1.4" fill="#2a2af2"/>
<rect x="778.70" y="27.20" width="1.4" height="1.4" fill="#2a2af2"/>
<rect x="774.20" y="29.70" width="1.4" height="1.4" fill="#2a2af2"/>
<rect x="777.20" y="29.70" width="1.4" height="1.4" fill="#2a2af2"/>
<rect x="780.20" y="29.70" width="1.4" height="1.4" fill="#2a2af2"/>
<rect x="775.70" y="32.20" width="1.4" height="1.4" fill="#2a2af2"/>
<rect x="778.70" y="32.20" width="1.4" height="1.4" fill="#2a2af2"/>
<path d="M769.8 20.6L775.4 26.2M775.4 20.6L769.8 26.2" stroke="#e8202a" stroke-width="1.3"/>
<path d="M799.6 33.6L809.2 24.200000000000003" stroke="#e9b12c" stroke-width="2.5" stroke-linecap="round"/><path d="M807.8000000000001 22.8L811.6 26.400000000000002" stroke="#e9b12c" stroke-width="2.5" stroke-linecap="round"/>
<path d="M801.6 20.6V25M799.4 22.8H803.8" stroke="#222" stroke-width="1.2"/>
<path d="M823 33.6L832.6 24.200000000000003" stroke="#c4c4c4" stroke-width="2.5" stroke-linecap="round"/><path d="M831.2 22.8L835 26.400000000000002" stroke="#c4c4c4" stroke-width="2.5" stroke-linecap="round"/>
<circle cx="825" cy="23" r="1.7" fill="none" stroke="#b0b0b0" stroke-width="1.4" stroke-dasharray="0.9 0.6"/>
<path d="M846.4 33.6L856.0 24.200000000000003" stroke="#c4c4c4" stroke-width="2.5" stroke-linecap="round"/><path d="M854.6 22.8L858.4 26.400000000000002" stroke="#c4c4c4" stroke-width="2.5" stroke-linecap="round"/>
<rect x="846.6" y="22.2" width="3.6" height="4.2" fill="#b4b4b4"/><rect x="846" y="21.2" width="4.8" height="0.9" fill="#b4b4b4"/>
<rect x="881" y="24.2" width="8.8" height="11.2" fill="#ffffff"/>
<path d="M878.4 33.8Q878.8 25.2 887.2 23.8" fill="none" stroke="#0b2a2e" stroke-width="2.2"/><path d="M878.4 33.8Q878.8 25.2 887.2 23.8" fill="none" stroke="#17a7a5" stroke-width="0.9"/><circle cx="878.4" cy="33.8" r="1.2" fill="#e8d020" stroke="#333" stroke-width="0.5"/><circle cx="887.2" cy="23.8" r="1.2" fill="#e8d020" stroke="#333" stroke-width="0.5"/>
<rect x="873.4" y="19.8" width="5.8" height="5.8" rx="0.6" fill="#2e9a3a"/><path d="M876.3 21V24.4M874.6 22.7H878" stroke="#fff" stroke-width="1.5"/>
<path d="M914.6 34.9L902.6 23.4" stroke="#4b5f8a" stroke-width="1"/><path d="M901 21.9L905.2 23L902.2 26Z" fill="#2b4a8a"/>
<path d="M921.0 26.0H926.2L923.6 29.0Z" fill="#1a1a1a"/>
</g>
<g id="ticons"><g transform="translate(0 0.6)">
<path d="M9.2 51.6L15.4 48L18.9 47.7L14.7 50.7Z" fill="#e6e6e6" stroke="#111" stroke-width="0.8" stroke-linejoin="round"/><path d="M14.7 50.7L18.9 47.7L17.6 51.6L14.7 56.5Z" fill="#2a2a2a" stroke="#111" stroke-width="0.8" stroke-linejoin="round"/><path d="M16.2 50.4L17.6 49.4L16.6 52.4L15.8 53.6Z" fill="#f0f0f0"/><path d="M9.2 51.6L14.7 50.7V56.5L9.2 57.4Z" fill="#fff" stroke="#111" stroke-width="0.8" stroke-linejoin="round"/><path d="M9.7 52.1L14.2 51.4V55L9.7 55.8Z" fill="#f01018"/>
</g>
<rect x="481.3" y="49.3" width="7" height="8.4" rx="1.2" fill="#f6f2fd" stroke="#8e96aa" stroke-width="0.8"/>
<rect x="483.0" y="51.2" width="1.1" height="1.1" fill="#8a6cf0"/>
<rect x="485.6" y="51.2" width="1.1" height="1.1" fill="#8a6cf0"/>
<rect x="483.0" y="53.4" width="1.1" height="1.1" fill="#8a6cf0"/>
<rect x="485.6" y="53.4" width="1.1" height="1.1" fill="#8a6cf0"/>
<rect x="483.0" y="55.6" width="1.1" height="1.1" fill="#8a6cf0"/>
<rect x="485.6" y="55.6" width="1.1" height="1.1" fill="#8a6cf0"/>
</g>
<g id="strip">
<path d="M949.2 268V300M949.2 306V338M949.2 344V372" stroke="#d2d2d2" stroke-width="0.9" fill="none"/>
<path d="M947.1 281.1L949.6 282.8L947.1 284.5Z" fill="#1a1a1a"/>
<path d="M947.1 319.5L949.6 321.2L947.1 322.9Z" fill="#1a1a1a"/>
<path d="M947.1 356.90000000000003L949.6 358.6L947.1 360.3Z" fill="#1a1a1a"/>
</g>
</svg>
</body></html>
